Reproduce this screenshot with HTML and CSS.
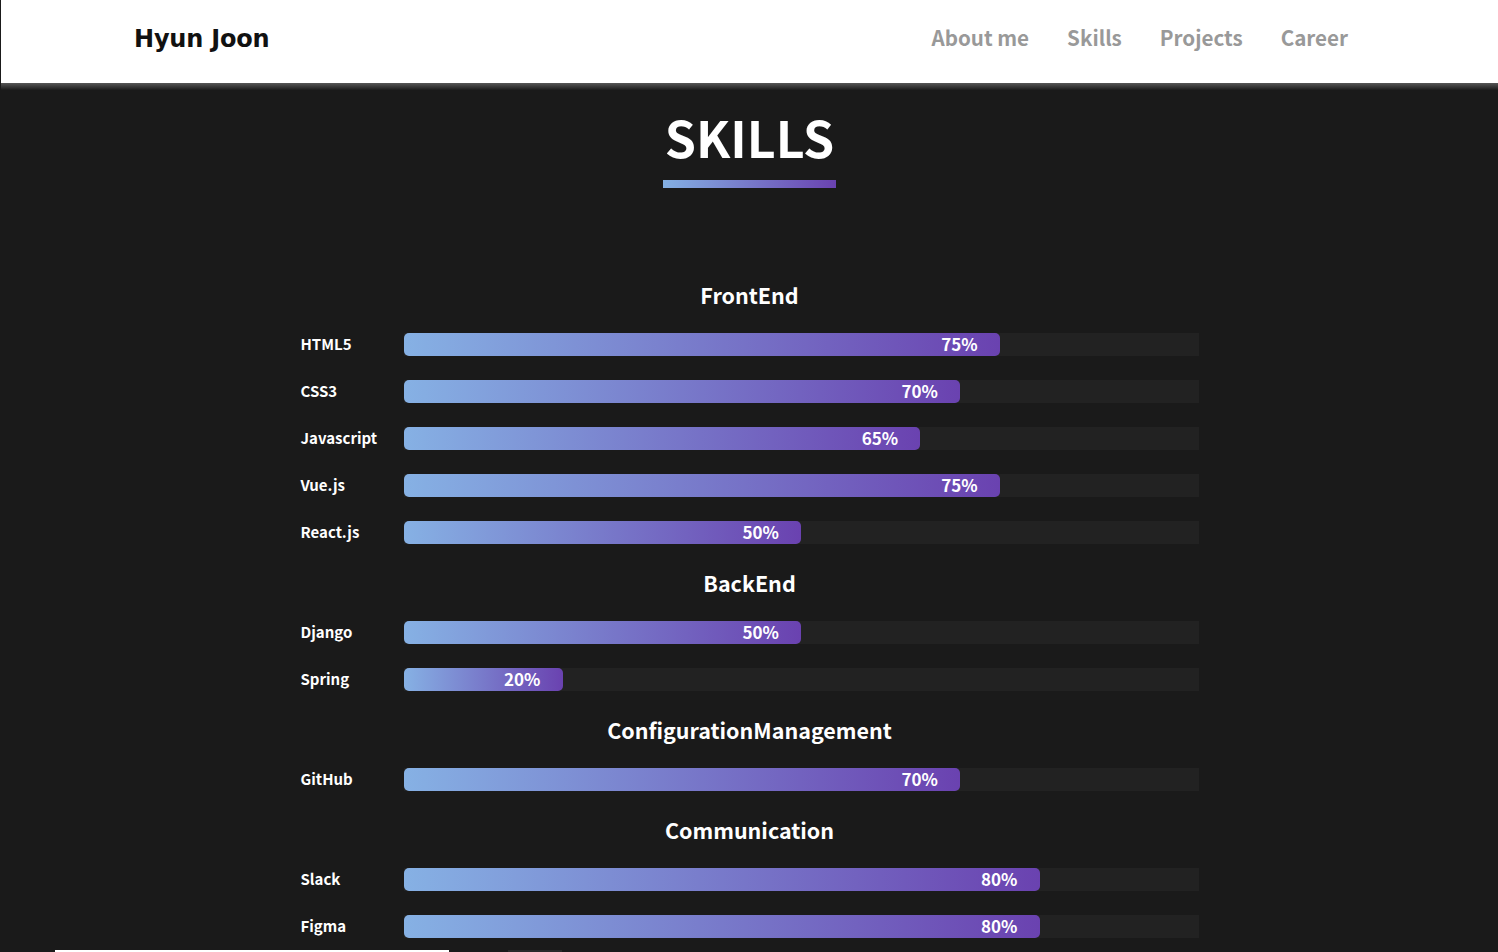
FILE: index.html
```html
<!DOCTYPE html>
<html lang="en">
<head>
<meta charset="utf-8">
<title>Hyun Joon</title>
<link rel="stylesheet" href="styles.css">
</head>
<body>
<header class="site-header">
  <div class="logo">Hyun Joon</div>
  <nav class="nav">
    <a href="#about">About me</a>
    <a href="#skills">Skills</a>
    <a href="#projects">Projects</a>
    <a href="#career">Career</a>
  </nav>
</header>
<main class="main">
  <section class="skills" id="skills">
    <h1 class="title">SKILLS</h1>
    <div class="title-bar"></div>
    <div class="groups">
      <h2 class="group-title">FrontEnd</h2>
      <div class="row"><span class="label">HTML5</span><div class="track"><div class="fill" style="width:75%"><span>75%</span></div></div></div>
      <div class="row"><span class="label">CSS3</span><div class="track"><div class="fill" style="width:70%"><span>70%</span></div></div></div>
      <div class="row"><span class="label">Javascript</span><div class="track"><div class="fill" style="width:65%"><span>65%</span></div></div></div>
      <div class="row"><span class="label">Vue.js</span><div class="track"><div class="fill" style="width:75%"><span>75%</span></div></div></div>
      <div class="row"><span class="label">React.js</span><div class="track"><div class="fill" style="width:50%"><span>50%</span></div></div></div>
      <h2 class="group-title">BackEnd</h2>
      <div class="row"><span class="label">Django</span><div class="track"><div class="fill" style="width:50%"><span>50%</span></div></div></div>
      <div class="row"><span class="label">Spring</span><div class="track"><div class="fill" style="width:20%"><span>20%</span></div></div></div>
      <h2 class="group-title">ConfigurationManagement</h2>
      <div class="row"><span class="label">GitHub</span><div class="track"><div class="fill" style="width:70%"><span>70%</span></div></div></div>
      <h2 class="group-title">Communication</h2>
      <div class="row"><span class="label">Slack</span><div class="track"><div class="fill" style="width:80%"><span>80%</span></div></div></div>
      <div class="row"><span class="label">Figma</span><div class="track"><div class="fill" style="width:80%"><span>80%</span></div></div></div>
    </div>
  </section>
  <section class="next">
    <div class="card"></div>
    <div class="chip"></div>
  </section>
</main>
</body>
</html>
```
FILE: styles.css
```css
* { box-sizing: border-box; }
html, body { margin: 0; padding: 0; }
body {
  background: #1a1a1a;
  font-family: "Noto Sans CJK KR", "Noto Sans", sans-serif;
  color: #fff;
  border-left: 1px solid #1a1a1a;
}
.site-header {
  height: 83px;
  background: #fff;
  display: flex;
  align-items: center;
  justify-content: space-between;
  padding: 0 150px 9px 133px;
}
.logo {
  font-family: "DejaVu Sans", sans-serif;
  font-weight: bold;
  font-size: 24px;
  color: #111;
  letter-spacing: -0.2px;
  padding-top: 4px;
}
.nav {
  display: flex;
  gap: 38px;
}
.nav a {
  color: #999;
  text-decoration: none;
  font-weight: bold;
  font-size: 20.6px;
}
.main {
  background: linear-gradient(#575757, #1a1a1a 7px) no-repeat top / 100% 7px, #1a1a1a;
}
.skills {
  width: 898px;
  margin: 0 auto;
  padding-top: 21px;
  display: flex;
  flex-direction: column;
  align-items: center;
}
.title {
  margin: 0;
  font-size: 50px;
  line-height: 64px;
  font-weight: bold;
}
.title-bar {
  width: 173px;
  height: 8px;
  margin-top: 12px;
  background: linear-gradient(90deg, #84b0e3, #6a42b0);
}
.groups {
  width: 100%;
  margin-top: 92px;
  display: flex;
  flex-direction: column;
  gap: 24px;
}
.group-title {
  margin: 0;
  text-align: center;
  font-size: 21.5px;
  line-height: 29px;
  font-weight: bold;
}
.row {
  display: flex;
  align-items: center;
  height: 23px;
}
.label {
  width: 103px;
  flex: none;
  font-size: 15px;
  font-weight: bold;
  margin-top: -3px;
}
.track {
  flex: 1;
  height: 23px;
  background: #222;
}
.fill {
  height: 100%;
  border-radius: 5px;
  background: linear-gradient(90deg, #86b1e4, #6a42b0);
  display: flex;
  align-items: center;
  justify-content: flex-end;
  padding-right: 22px;
  font-size: 17px;
  font-weight: bold;
}
.fill span { margin-top: -2px; }
.next {
  display: flex;
  padding: 12px 0 0 54px;
  gap: 59px;
  height: 14px;
  overflow: hidden;
}
.card {
  width: 394px;
  height: 40px;
  background: #fff;
}
.chip {
  width: 54px;
  height: 40px;
  background: #2a2a2a;
}
```
